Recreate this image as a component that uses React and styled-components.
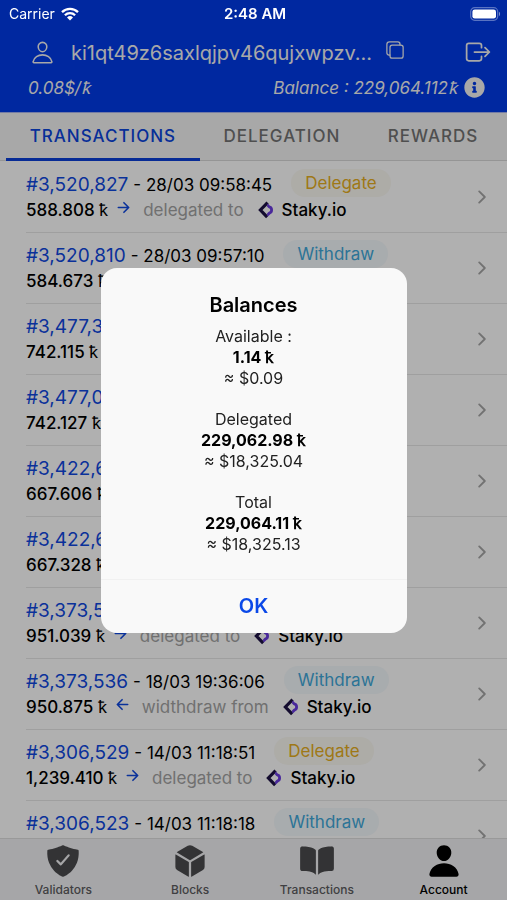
import React from "react";
import styled, { createGlobalStyle } from "styled-components";
import {
  IoPersonOutline,
  IoCopyOutline,
  IoExitOutline,
  IoShieldCheckmark,
  IoCube,
  IoBook,
  IoPerson,
  IoArrowForward,
  IoArrowBack,
  IoChevronForward,
} from "react-icons/io5";
import { FaInfoCircle } from "react-icons/fa";

const GlobalStyle = createGlobalStyle`
  * { box-sizing: border-box; }
  body {
    margin: 0;
    font-family: Inter, "Liberation Sans", sans-serif;
    color: #000;
    background: #fff;
  }
  button { font: inherit; color: inherit; background: none; border: 0; padding: 0; cursor: pointer; }
  a { color: inherit; text-decoration: none; }
  svg { display: block; flex: none; }
`;

const Screen = styled.div`
  height: 100vh;
  display: flex;
  flex-direction: column;
  background: #fff;
`;

const TopArea = styled.header`
  flex: none;
  height: 113px;
  padding-top: 28px;
  background: #003ae8;
  border-bottom: 1px solid #a9b4f0;
  color: #f4f4f4;
`;

const StatusBar = styled.div`
  position: fixed;
  inset: 0 0 auto 0;
  z-index: 20;
  height: 28px;
  padding: 0 6px 0 9px;
  display: grid;
  grid-template-columns: 1fr auto 1fr;
  align-items: center;
  color: #fff;
  font-size: 15px;
  line-height: 28px;
`;

const Carrier = styled.span`
  display: flex;
  align-items: center;
  gap: 6px;
  font-size: 14px;
`;

const Clock = styled.time`
  font-weight: 600;
`;

const BatterySlot = styled.span`
  justify-self: end;
`;

const AccountRow = styled.div`
  display: flex;
  align-items: center;
  height: 48px;
  padding: 0 15px 0 30px;
`;

const Address = styled.span`
  flex: 0 0 auto;
  min-width: 300px;
  margin: 2px 13px 0 16px;
  font-size: 20px;
  line-height: 24px;
  white-space: nowrap;
`;

const CopyButton = styled.button`
  margin-bottom: 4px;
`;

const ExitButton = styled.button`
  margin-left: auto;
`;

const PriceRow = styled.div`
  display: flex;
  align-items: center;
  justify-content: space-between;
  height: 22px;
  padding: 0 22px 0 28px;
  font-size: 17px;
  font-style: italic;
`;

const BalanceInfo = styled.span`
  display: flex;
  align-items: center;
  gap: 7px;
`;

const Segments = styled.nav`
  flex: none;
  display: flex;
  height: 48px;
  padding: 0 5px 0 6px;
  background: #f4f4f4;
  border-bottom: 1px solid #d8d8d8;
`;

const Segment = styled.button`
  flex: 1 1 auto;
  height: 48px;
  padding: 0 16px;
  font-size: 17px;
  font-weight: 500;
  letter-spacing: 1px;
  text-transform: uppercase;
  color: ${(p) => (p.$active ? "#0b44dc" : "#737373")};
  border-bottom: 3px solid ${(p) => (p.$active ? "#0b3fd8" : "transparent")};
`;

const List = styled.ul`
  flex: 1 1 0;
  min-height: 0;
  margin: 0;
  padding: 1px 0 0;
  list-style: none;
  overflow-y: auto;
  scrollbar-width: none;
`;

const Item = styled.li`
  display: flex;
  align-items: center;
  height: 71px;
  margin-left: 26px;
  padding-right: 15px;
  border-bottom: 1px solid #e6e6e6;
  white-space: nowrap;
`;

const ItemBody = styled.div`
  flex: 1;
  min-width: 0;
`;

const Line = styled.div`
  display: flex;
  align-items: center;
  height: 25px;
  font-size: 17px;
`;

const BlockLink = styled.a`
  margin-right: 5px;
  font-size: 19px;
  color: #0f48e0;
`;

const Chip = styled.span`
  margin: -4px 0 0 19px;
  padding: 0 14px;
  border-radius: 14px;
  font-size: 17px;
  line-height: 28px;
  color: ${(p) => (p.$kind === "Delegate" ? "#e6ae22" : "#40a8da")};
  background: ${(p) => (p.$kind === "Delegate" ? "#fbf9f2" : "#f4f9fc")};
`;

const Amount = styled.span`
  font-weight: 500;
`;

const Direction = styled.span`
  margin: -4px 11px 0 7px;
  color: #0f48e0;
`;

const Verb = styled.span`
  margin-right: 14px;
  color: #a3a3a3;
`;

const ValidatorName = styled.span`
  margin-left: 8px;
  font-weight: 500;
`;

const TabBar = styled.nav`
  flex: none;
  display: grid;
  grid-template-columns: repeat(4, minmax(0, 1fr));
  height: 62px;
  background: #f1f1f3;
  border-top: 1px solid #dedede;
`;

const TabLink = styled.a`
  display: flex;
  flex-direction: column;
  align-items: center;
  gap: 3px;
  padding-top: 4px;
  font-size: 12px;
  line-height: 16px;
  font-weight: 500;
  color: ${(p) => (p.$active ? "#000" : "#5c5c60")};

  svg { color: ${(p) => (p.$active ? "#000" : "#4b4b4e")}; }
`;

const Backdrop = styled.div`
  position: fixed;
  inset: 0;
  z-index: 10;
  display: flex;
  align-items: center;
  justify-content: center;
  background: rgba(0, 0, 0, 0.31);
`;

const Dialog = styled.section`
  width: 306px;
  max-width: 90%;
  border-radius: 16px;
  background: #f9f9f9;
  text-align: center;
  overflow: hidden;
`;

const DialogBody = styled.div`
  padding: 24px 16px;
`;

const DialogTitle = styled.h2`
  margin: 0 0 8px;
  font-size: 20px;
  line-height: 26px;
  font-weight: 600;
`;

const BalanceGroup = styled.p`
  margin: 0;
  padding-bottom: 20px;
  font-size: 16px;
  line-height: 21px;
  color: #222;

  &:last-child { padding-bottom: 0; }
  span, strong { display: block; }
  strong { color: #000; }
`;

const OkButton = styled.button`
  display: block;
  width: 100%;
  height: 54px;
  border-top: 1px solid #f1f1f1;
  font-size: 20px;
  font-weight: 600;
  color: #0a48e8;
`;

function WifiIcon() {
  return (
    <svg width="18" height="14" viewBox="0 0 18 14" fill="none" stroke="#fff" strokeWidth="2.3">
      <path d="M1 5.1a11.4 11.4 0 0 1 16 0" />
      <path d="M3.9 8.2a7.3 7.3 0 0 1 10.2 0" />
      <path d="M9 13.6 6 10.4a4.3 4.3 0 0 1 6 0z" fill="#fff" stroke="none" />
    </svg>
  );
}

function BatteryIcon() {
  return (
    <svg width="31" height="14" viewBox="0 0 31 14">
      <rect x="0.7" y="0.7" width="27" height="12.6" rx="4" fill="none" stroke="#fff" strokeOpacity="0.35" strokeWidth="1.2" />
      <rect x="2.4" y="2.4" width="23.6" height="9.2" rx="2.4" fill="#fff" />
      <path d="M29 4.8c1.4.6 1.4 3.8 0 4.4z" fill="#fff" fillOpacity="0.5" />
    </svg>
  );
}

function StakyLogo() {
  return (
    <svg width="16" height="18" viewBox="0 0 16 18" fill="none" strokeWidth="3.2">
      <path d="M9.6 1.6 2.4 9l6.8 7.2" stroke="#1d1245" />
      <path d="M9.2 4.2c1.4.2 1.4 1.7 2.6 2 1.3.4 1.8 1.4 1.8 2.8s-.6 2.4-1.8 2.8c-1.2.4-1.2 1.8-2.6 2.2" stroke="#6a3be0" strokeWidth="2.8" />
    </svg>
  );
}

const transactions = [
  ["3,520,827", "28/03 09:58:45", "Delegate", "588.808"],
  ["3,520,810", "28/03 09:57:10", "Withdraw", "584.673"],
  ["3,477,312", "25/03 11:21:06", "Delegate", "742.115"],
  ["3,477,022", "25/03 10:54:12", "Withdraw", "742.127"],
  ["3,422,655", "21/03 18:40:33", "Delegate", "667.606"],
  ["3,422,640", "21/03 18:38:51", "Withdraw", "667.328"],
  ["3,373,549", "18/03 19:37:20", "Delegate", "951.039"],
  ["3,373,536", "18/03 19:36:06", "Withdraw", "950.875"],
  ["3,306,529", "14/03 11:18:51", "Delegate", "1,239.410"],
  ["3,306,523", "14/03 11:18:18", "Withdraw", "1,239.102"],
];

const balances = [
  ["Available :", "1.14", "0.09"],
  ["Delegated", "229,062.98", "18,325.04"],
  ["Total", "229,064.11", "18,325.13"],
];

const tabs = [
  ["Validators", IoShieldCheckmark],
  ["Blocks", IoCube],
  ["Transactions", IoBook],
  ["Account", IoPerson],
];

function Transaction({ block, date, kind, amount }) {
  const delegated = kind === "Delegate";
  return (
    <Item>
      <ItemBody>
        <Line>
          <BlockLink href={`#${block}`}>#{block}</BlockLink>
          <span>- {date}</span>
          <Chip $kind={kind}>{kind}</Chip>
        </Line>
        <Line>
          <Amount>{amount} ꝁ</Amount>
          <Direction>{delegated ? <IoArrowForward size={17} /> : <IoArrowBack size={17} />}</Direction>
          <Verb>{delegated ? "delegated to" : "widthdraw from"}</Verb>
          <StakyLogo />
          <ValidatorName>Staky.io</ValidatorName>
        </Line>
      </ItemBody>
      <IoChevronForward size={20} color="#a6a6a6" />
    </Item>
  );
}

export default function App() {
  return (
    <>
      <GlobalStyle />
      <StatusBar>
        <Carrier>Carrier <WifiIcon /></Carrier>
        <Clock>2:48 AM</Clock>
        <BatterySlot><BatteryIcon /></BatterySlot>
      </StatusBar>
      <Screen>
        <TopArea>
          <AccountRow>
            <IoPersonOutline size={25} />
            <Address>ki1qt49z6saxlqjpv46qujxwpzv...</Address>
            <CopyButton aria-label="Copy address"><IoCopyOutline size={20} /></CopyButton>
            <ExitButton aria-label="Log out"><IoExitOutline size={28} /></ExitButton>
          </AccountRow>
          <PriceRow>
            <span>0.08$/ꝁ</span>
            <BalanceInfo>Balance : 229,064.112ꝁ <FaInfoCircle size={21} /></BalanceInfo>
          </PriceRow>
        </TopArea>
        <Segments>
          <Segment $active>Transactions</Segment>
          <Segment>Delegation</Segment>
          <Segment>Rewards</Segment>
        </Segments>
        <List>
          {transactions.map(([block, date, kind, amount]) => (
            <Transaction key={block} block={block} date={date} kind={kind} amount={amount} />
          ))}
        </List>
        <TabBar>
          {tabs.map(([label, Icon]) => (
            <TabLink key={label} href={`#${label}`} $active={label === "Account"}>
              <Icon size={36} />
              {label}
            </TabLink>
          ))}
        </TabBar>
      </Screen>
      <Backdrop>
        <Dialog role="dialog" aria-modal="true" aria-labelledby="balances-title">
          <DialogBody>
            <DialogTitle id="balances-title">Balances</DialogTitle>
            {balances.map(([label, amount, usd]) => (
              <BalanceGroup key={label}>
                <span>{label}</span>
                <strong>{amount} ꝁ</strong>
                <span>≈ ${usd}</span>
              </BalanceGroup>
            ))}
          </DialogBody>
          <OkButton>OK</OkButton>
        </Dialog>
      </Backdrop>
    </>
  );
}
